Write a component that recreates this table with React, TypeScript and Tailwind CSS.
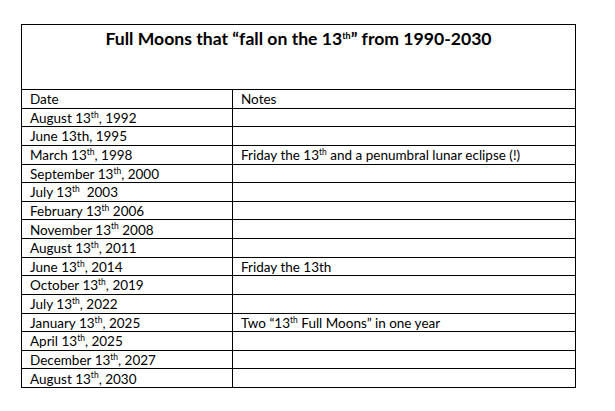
import React from "react";

type Row = { month: string; sup: boolean; rest: string; note?: React.ReactNode };

const Th = () => <sup className="text-[8.5px] -top-[0.6em]">th</sup>;

const rows: Row[] = [
  { month: "August 13", sup: true, rest: ", 1992" },
  { month: "June 13th, 1995", sup: false, rest: "" },
  {
    month: "March 13",
    sup: true,
    rest: ", 1998",
    note: (
      <>
        Friday the 13<Th /> and a penumbral lunar eclipse (!)
      </>
    ),
  },
  { month: "September 13", sup: true, rest: ", 2000" },
  { month: "July 13", sup: true, rest: "\u00a0 2003" },
  { month: "February 13", sup: true, rest: " 2006" },
  { month: "November 13", sup: true, rest: " 2008" },
  { month: "August 13", sup: true, rest: ", 2011" },
  { month: "June 13", sup: true, rest: ", 2014", note: "Friday the 13th" },
  { month: "October 13", sup: true, rest: ", 2019" },
  { month: "July 13", sup: true, rest: ", 2022" },
  {
    month: "January 13",
    sup: true,
    rest: ", 2025",
    note: (
      <>
        Two “13<Th /> Full Moons” in one year
      </>
    ),
  },
  { month: "April 13", sup: true, rest: ", 2025" },
  { month: "December 13", sup: true, rest: ", 2027" },
  { month: "August 13", sup: true, rest: ", 2030" },
];

const Cell = ({ children, first }: { children?: React.ReactNode; first?: boolean }) => (
  <div
    className={
      "flex items-end pl-2 pb-[1px] leading-none whitespace-nowrap " +
      (first ? "w-[211px] border-r border-black" : "flex-1")
    }
  >
    {children}
  </div>
);

export default function App() {
  return (
    <div
      className="w-[615px] h-[411px] bg-white text-black pt-6 pl-[21px]"
      style={{ fontFamily: "Lato, 'Open Sans', sans-serif" }}
    >
      <div className="w-[555px] border border-black flex flex-col">
        <div className="h-[65px] border-b border-black flex justify-center pt-[3px]">
          <h1 className="text-[17.6px] font-bold leading-tight">
            Full Moons that “fall on the 13<sup className="text-[9px] -top-[0.7em]">th</sup>” from 1990-2030
          </h1>
        </div>
        <div className="h-[297px] flex flex-col text-[13.5px]">
          <div className="flex-1 flex border-b border-black">
            <Cell first>Date</Cell>
            <Cell>Notes</Cell>
          </div>
          {rows.map((r, i) => (
            <div
              key={i}
              className={"flex-1 flex " + (i < rows.length - 1 ? "border-b border-black" : "")}
            >
              <Cell first>
                <span>
                  {r.month}
                  {r.sup && <Th />}
                  {r.rest}
                </span>
              </Cell>
              <Cell>{r.note && <span>{r.note}</span>}</Cell>
            </div>
          ))}
        </div>
      </div>
    </div>
  );
}
